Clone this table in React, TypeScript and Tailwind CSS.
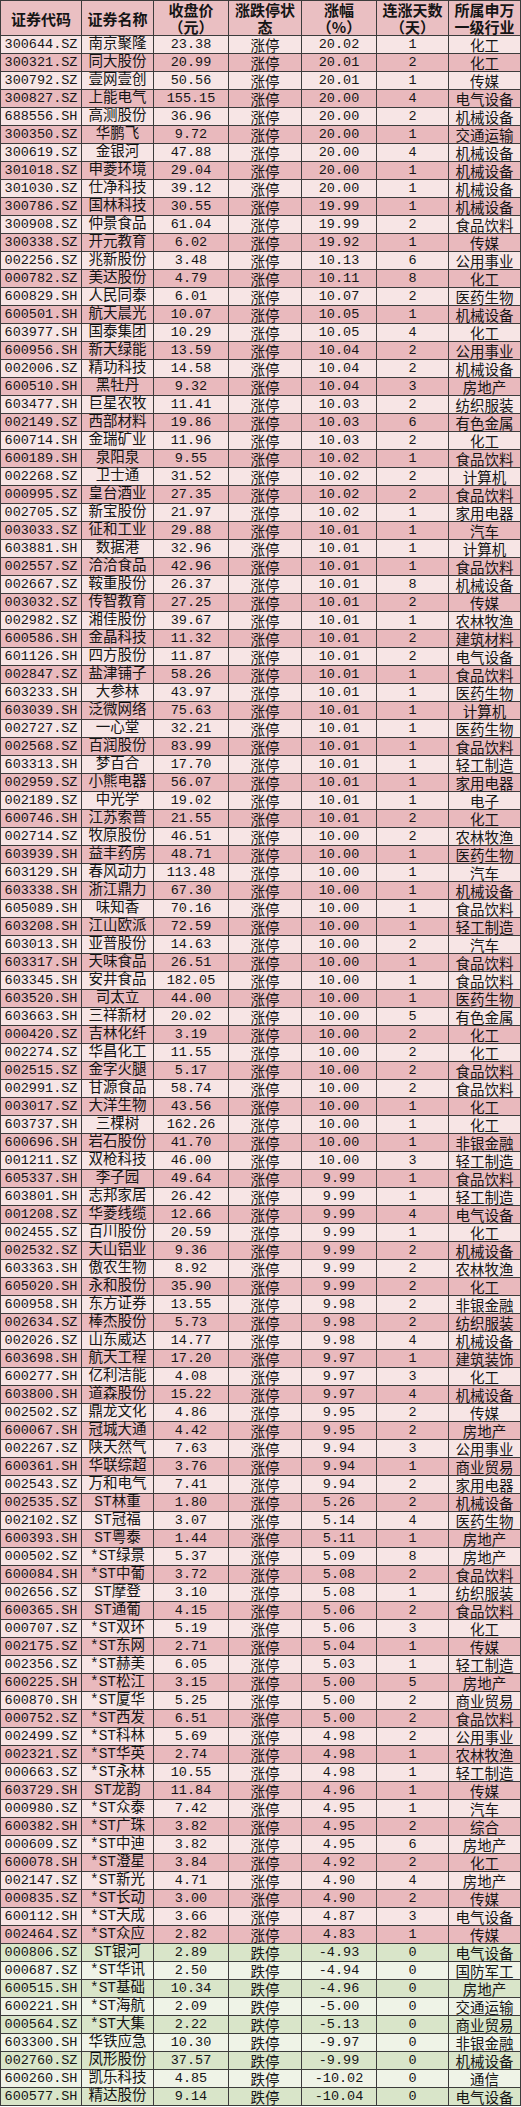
const raw = `300644.SZ|南京聚隆|23.38|20.02|1|化工
300321.SZ|同大股份|20.99|20.01|2|化工
300792.SZ|壹网壹创|50.56|20.01|1|传媒
300827.SZ|上能电气|155.15|20.00|4|电气设备
688556.SH|高测股份|36.96|20.00|2|机械设备
300350.SZ|华鹏飞|9.72|20.00|1|交通运输
300619.SZ|金银河|47.88|20.00|4|机械设备
301018.SZ|申菱环境|29.04|20.00|1|机械设备
301030.SZ|仕净科技|39.12|20.00|1|机械设备
300786.SZ|国林科技|30.55|19.99|1|机械设备
300908.SZ|仲景食品|61.04|19.99|2|食品饮料
300338.SZ|开元教育|6.02|19.92|1|传媒
002256.SZ|兆新股份|3.48|10.13|6|公用事业
000782.SZ|美达股份|4.79|10.11|8|化工
600829.SH|人民同泰|6.01|10.07|2|医药生物
600501.SH|航天晨光|10.07|10.05|1|机械设备
603977.SH|国泰集团|10.29|10.05|4|化工
600956.SH|新天绿能|13.59|10.04|2|公用事业
002006.SZ|精功科技|14.58|10.04|2|机械设备
600510.SH|黑牡丹|9.32|10.04|3|房地产
603477.SH|巨星农牧|11.41|10.03|2|纺织服装
002149.SZ|西部材料|19.86|10.03|6|有色金属
600714.SH|金瑞矿业|11.96|10.03|2|化工
600189.SH|泉阳泉|9.55|10.02|1|食品饮料
002268.SZ|卫士通|31.52|10.02|2|计算机
000995.SZ|皇台酒业|27.35|10.02|2|食品饮料
002705.SZ|新宝股份|21.97|10.02|1|家用电器
003033.SZ|征和工业|29.88|10.01|1|汽车
603881.SH|数据港|32.96|10.01|1|计算机
002557.SZ|洽洽食品|42.96|10.01|1|食品饮料
002667.SZ|鞍重股份|26.37|10.01|8|机械设备
003032.SZ|传智教育|27.25|10.01|2|传媒
002982.SZ|湘佳股份|39.67|10.01|1|农林牧渔
600586.SH|金晶科技|11.32|10.01|2|建筑材料
601126.SH|四方股份|11.87|10.01|2|电气设备
002847.SZ|盐津铺子|58.26|10.01|1|食品饮料
603233.SH|大参林|43.97|10.01|1|医药生物
603039.SH|泛微网络|75.63|10.01|1|计算机
002727.SZ|一心堂|32.21|10.01|1|医药生物
002568.SZ|百润股份|83.99|10.01|1|食品饮料
603313.SH|梦百合|17.70|10.01|1|轻工制造
002959.SZ|小熊电器|56.07|10.01|1|家用电器
002189.SZ|中光学|19.02|10.01|1|电子
600746.SH|江苏索普|21.55|10.01|2|化工
002714.SZ|牧原股份|46.51|10.00|2|农林牧渔
603939.SH|益丰药房|48.71|10.00|1|医药生物
603129.SH|春风动力|113.48|10.00|1|汽车
603338.SH|浙江鼎力|67.30|10.00|1|机械设备
605089.SH|味知香|70.16|10.00|1|食品饮料
603208.SH|江山欧派|72.59|10.00|1|轻工制造
603013.SH|亚普股份|14.63|10.00|2|汽车
603317.SH|天味食品|26.51|10.00|1|食品饮料
603345.SH|安井食品|182.05|10.00|1|食品饮料
603520.SH|司太立|44.00|10.00|1|医药生物
603663.SH|三祥新材|20.02|10.00|5|有色金属
000420.SZ|吉林化纤|3.19|10.00|2|化工
002274.SZ|华昌化工|11.55|10.00|2|化工
002515.SZ|金字火腿|5.17|10.00|2|食品饮料
002991.SZ|甘源食品|58.74|10.00|2|食品饮料
003017.SZ|大洋生物|43.56|10.00|1|化工
603737.SH|三棵树|162.26|10.00|1|化工
600696.SH|岩石股份|41.70|10.00|1|非银金融
001211.SZ|双枪科技|46.00|10.00|3|轻工制造
605337.SH|李子园|49.64|9.99|1|食品饮料
603801.SH|志邦家居|26.42|9.99|1|轻工制造
001208.SZ|华菱线缆|12.66|9.99|4|电气设备
002455.SZ|百川股份|20.59|9.99|1|化工
002532.SZ|天山铝业|9.36|9.99|2|机械设备
603363.SH|傲农生物|8.92|9.99|2|农林牧渔
605020.SH|永和股份|35.90|9.99|2|化工
600958.SH|东方证券|13.55|9.98|2|非银金融
002634.SZ|棒杰股份|5.73|9.98|2|纺织服装
002026.SZ|山东威达|14.77|9.98|4|机械设备
603698.SH|航天工程|17.20|9.97|1|建筑装饰
600277.SH|亿利洁能|4.08|9.97|3|化工
603800.SH|道森股份|15.22|9.97|4|机械设备
002502.SZ|鼎龙文化|4.86|9.95|2|传媒
600067.SH|冠城大通|4.42|9.95|2|房地产
002267.SZ|陕天然气|7.63|9.94|3|公用事业
600361.SH|华联综超|3.76|9.94|1|商业贸易
002543.SZ|万和电气|7.41|9.94|2|家用电器
002535.SZ|ST林重|1.80|5.26|2|机械设备
002102.SZ|ST冠福|3.07|5.14|4|医药生物
600393.SH|ST粤泰|1.44|5.11|1|房地产
000502.SZ|*ST绿景|5.37|5.09|8|房地产
600084.SH|*ST中葡|3.72|5.08|2|食品饮料
002656.SZ|ST摩登|3.10|5.08|1|纺织服装
600365.SH|ST通葡|4.15|5.06|2|食品饮料
000707.SZ|*ST双环|5.19|5.06|3|化工
002175.SZ|*ST东网|2.71|5.04|1|传媒
002356.SZ|*ST赫美|6.05|5.03|1|轻工制造
600225.SH|*ST松江|3.15|5.00|5|房地产
600870.SH|*ST厦华|5.25|5.00|2|商业贸易
000752.SZ|*ST西发|6.51|5.00|2|食品饮料
002499.SZ|*ST科林|5.69|4.98|2|公用事业
002321.SZ|*ST华英|2.74|4.98|1|农林牧渔
000663.SZ|*ST永林|10.55|4.98|1|轻工制造
603729.SH|ST龙韵|11.84|4.96|1|传媒
000980.SZ|*ST众泰|7.42|4.95|1|汽车
600382.SH|*ST广珠|3.82|4.95|2|综合
000609.SZ|*ST中迪|3.82|4.95|6|房地产
600078.SH|*ST澄星|3.84|4.92|2|化工
002147.SZ|*ST新光|4.71|4.90|4|房地产
000835.SZ|*ST长动|3.00|4.90|2|传媒
600112.SH|*ST天成|3.66|4.87|3|电气设备
002464.SZ|*ST众应|2.82|4.83|1|传媒
000806.SZ|ST银河|2.89|-4.93|0|电气设备
000687.SZ|*ST华讯|2.50|-4.94|0|国防军工
600515.SH|*ST基础|10.34|-4.96|0|房地产
600221.SH|*ST海航|2.09|-5.00|0|交通运输
000564.SZ|*ST大集|2.22|-5.13|0|商业贸易
603300.SH|华铁应急|10.30|-9.97|0|非银金融
002760.SZ|凤形股份|37.57|-9.99|0|机械设备
600260.SH|凯乐科技|4.85|-10.02|0|通信
600577.SH|精达股份|9.14|-10.04|0|电气设备`;

type Row = {
  code: string;
  name: string;
  price: string;
  pct: string;
  days: string;
  industry: string;
};

const rows: Row[] = raw.split("\n").map((line) => {
  const [code, name, price, pct, days, industry] = line.split("|");
  return { code, name, price, pct, days, industry };
});

const gridCols = "grid grid-cols-[82px_72px_75px_73px_75px_72px_72px]";
const mono = "font-['Liberation_Mono','Noto_Sans_CJK_SC',monospace] text-[13.5px]";
const cjk = "font-['Noto_Sans_CJK_SC',sans-serif] text-[14.5px]";
const cell =
  "flex items-center justify-center border-r border-b border-[#3c3c3c] leading-[17px] whitespace-nowrap";

function rowColor(index: number, down: boolean, downIndex: number) {
  if (down) {
    return downIndex % 2 === 0 ? "bg-[#d9e5c9]" : "bg-[#eff3e7]";
  }
  return index % 2 === 0 ? "bg-[#f7e5e5]" : "bg-[#e9b9bd]";
}

const headers: string[][] = [
  ["证券代码"],
  ["证券名称"],
  ["收盘价", "（元）"],
  ["涨跌停状", "态"],
  ["涨幅", "（%）"],
  ["连涨天数", "（天）"],
  ["所属申万", "一级行业"],
];

export default function App() {
  let downCount = 0;
  return (
    <div className="w-[521px] bg-white text-[#151515]">
      <div
        className={`${gridCols} h-[36px] border-t border-[#3c3c3c] bg-[#eabfc2] font-['Noto_Sans_CJK_SC',sans-serif] text-[15px] font-bold`}
      >
        {headers.map((lines, i) => (
          <div
            key={i}
            className={`${cell} flex-col leading-[16px] ${i === 0 ? "border-l" : ""}`}
          >
            {lines.map((l) => (
              <span key={l}>{l}</span>
            ))}
          </div>
        ))}
      </div>
      {rows.map((r, i) => {
        const down = r.pct.startsWith("-");
        const bg = rowColor(i, down, downCount);
        if (down) downCount++;
        return (
          <div key={r.code} className={`${gridCols} h-[18px] ${bg}`}>
            <div className={`${cell} ${mono} border-l`}>{r.code}</div>
            <div className={`${cell} ${mono} text-[14.5px]`}>{r.name}</div>
            <div className={`${cell} ${mono}`}>{r.price}</div>
            <div className={`${cell} ${cjk}`}>{down ? "跌停" : "涨停"}</div>
            <div className={`${cell} ${mono}`}>{r.pct}</div>
            <div className={`${cell} ${mono}`}>{r.days}</div>
            <div className={`${cell} ${cjk}`}>{r.industry}</div>
          </div>
        );
      })}
    </div>
  );
}
